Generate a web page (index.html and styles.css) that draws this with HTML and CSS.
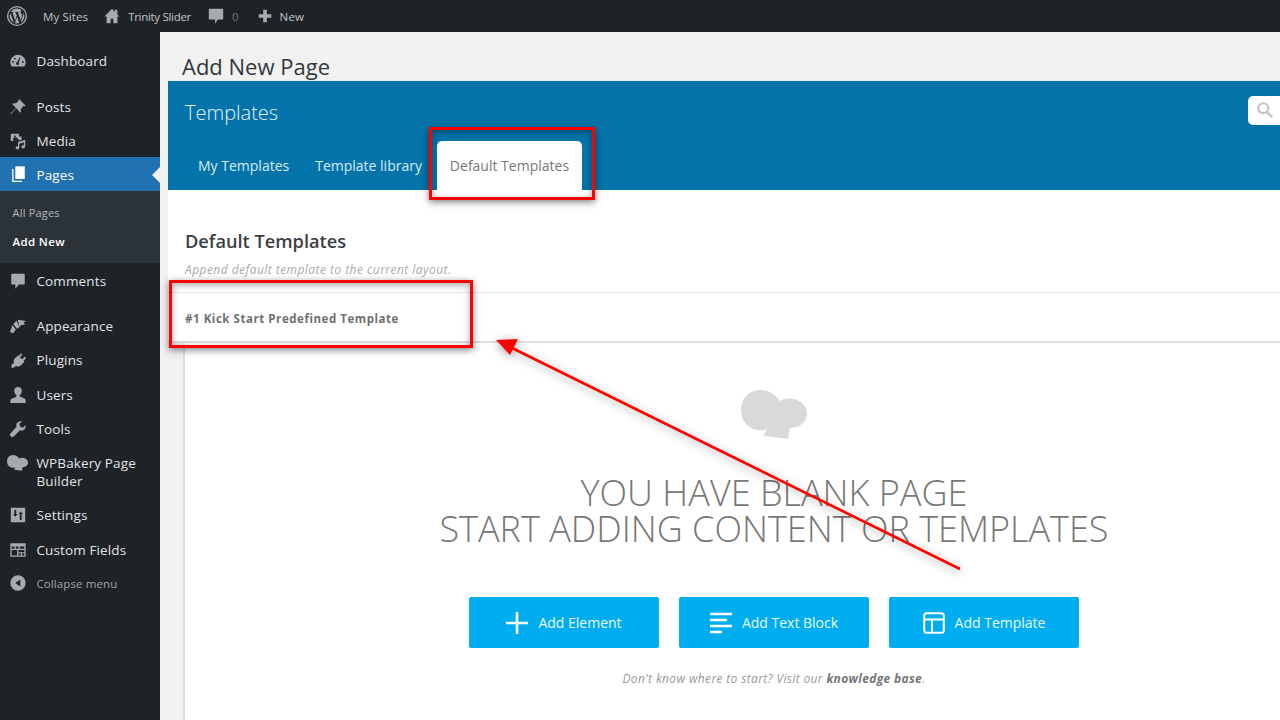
FILE: index.html
```html
<!DOCTYPE html>
<html lang="en">
<head>
<meta charset="utf-8">
<title>Add New Page</title>
<link rel="stylesheet" href="styles.css">
</head>
<body>
<header class="adminbar">
  <svg class="wp-logo" viewBox="0 0 24 24"><circle cx="12" cy="12" r="10.2" fill="none" stroke="#a7aaad" stroke-width="1.5"/><path fill="#a7aaad" d="M4 12c0 3.2 1.9 6 4.6 7.3L4.8 8.8A8 8 0 0 0 4 12zm13.4-.4c0-1-.4-1.7-.7-2.2-.4-.7-.8-1.3-.8-2 0-.8.6-1.5 1.4-1.5h.1A8 8 0 0 0 5.300 7.600h.5c.8 0 2.100-.1 2.100-.1.4 0 .5.6 0 .6 0 0-.4.1-.9.1l3 8.800 1.800-5.300-1.300-3.500c-.4 0-.8-.1-.8-.1-.4 0-.4-.7 0-.6 0 0 1.300.1 2.100.1s2.100-.1 2.100-.1c.4 0 .5.6 0 .6 0 0-.4.1-.9.1l3 8.700.8-2.700c.4-1 .6-1.800.6-2.600zM12.100 12.700l-2.400 7.100a8 8 0 0 0 4.900-.1l-.1-.1-2.400-6.900zm7-4.600v.8c0 .8-.2 1.700-.6 2.900l-2.400 7A8 8 0 0 0 19.100 8.100z"/></svg>
  <span class="bar-text sites">My Sites</span>
  <svg class="bar-icon home" viewBox="0 0 20 20"><path fill="#a7aaad" d="M16 8.500V3h-3v2.500L10 2 1.500 10.500H4V18h4.500v-5h3v5H16v-7.500h2.500z"/></svg>
  <span class="bar-text trinity">Trinity Slider</span>
  <svg class="bar-icon bubble" viewBox="0 0 20 20"><path fill="#a7aaad" d="M3 2h14a1 1 0 0 1 1 1v10a1 1 0 0 1-1 1h-5l-3 4.500V14H3a1 1 0 0 1-1-1V3a1 1 0 0 1 1-1z"/></svg>
  <span class="bar-text dim">0</span>
  <svg class="bar-icon plus" viewBox="0 0 20 20"><path fill="#a7aaad" d="M8 3h4v5h5v4h-5v5H8v-5H3V8h5z"/></svg>
  <span class="bar-text new">New</span>
</header>
<div class="layout">
  <nav class="sidebar">
    <a class="item dash"><svg class="ico" viewBox="0 0 20 20"><path d="M10 3a8.500 8.500 0 0 0-7.500 12.500A1 1 0 0 0 3.400 16h13.200a1 1 0 0 0 .9-.5A8.500 8.500 0 0 0 10 3zm1.300 9.700a1.700 1.700 0 1 1-2.100-1.600l2.600-5 .9.400-1.900 5.300c.2.300.5.600.5.900zM4.500 12a1 1 0 1 1 0-2 1 1 0 0 1 0 2zm2-3.700a1 1 0 1 1 0-2 1 1 0 0 1 0 2zm9 3.700a1 1 0 1 1 0-2 1 1 0 0 1 0 2z" fill-rule="evenodd"/></svg><span>Dashboard</span></a>
    <a class="item posts"><svg class="ico" viewBox="0 0 20 20"><path d="M11.500 1.500l7 7-1.500 1-1-.5-3 3.500c.5 1.500.3 2.800-.5 3.800L8.200 11.500 2 18l-.5-.5L7.800 11 3.500 6.700c1-.8 2.300-1 3.800-.5L10.800 3.200l-.5-1z"/></svg><span>Posts</span></a>
    <a class="item"><svg class="ico" viewBox="0 0 20 20"><path d="M2 2h9v3h3v3.500l-3 .9V8H9.500a2.500 2.500 0 1 0-4 2H2zM6.500 4a1 1 0 1 0 0 2 1 1 0 0 0 0-2zM10 11l8-2.500v7.700c0 1.200-1 2-2.200 2s-2-.7-2-1.700.9-1.700 2-1.700l.7.100v-3.500l-5 1.600v4.300c0 1.200-1 2-2.200 2-1.100 0-2-.7-2-1.700s.9-1.700 2-1.700l.7.100z"/></svg><span>Media</span></a>
    <a class="item current"><svg class="ico" viewBox="0 0 20 20"><path d="M7 1.500h10.500v14H7z"/><path d="M5 4.500v13h9.500V19H3.500V4.500z"/></svg><span>Pages</span></a>
    <div class="submenu">
      <a class="sub">All Pages</a>
      <a class="sub strong">Add New</a>
    </div>
    <a class="item comments"><svg class="ico" viewBox="0 0 20 20"><path d="M3.500 2h13a1 1 0 0 1 1 1v10a1 1 0 0 1-1 1H11l-4 4.500V14H3.500a1 1 0 0 1-1-1V3a1 1 0 0 1 1-1z"/></svg><span>Comments</span></a>
    <a class="item appearance"><svg class="ico" viewBox="0 0 20 20"><path d="M9.500 3l10 1.500-3 1 1 3-4 .5-1.500 2.500zM8.300 4.300L11.800 11l-3 2-4-5.200zM3.900 9l3.700 4.800-2.400 3.700c-1 .7-2.500.4-3.300-.5-.8-1-.7-2.400.2-3.200z"/></svg><span>Appearance</span></a>
    <a class="item"><svg class="ico" viewBox="0 0 20 20"><path d="M13 2.500l2 1.500-2.800 3.300 2.300 1.800L17.500 6l1.500 1.800-2.800 3.300 1 .8-4.500 4.500c-1.500 1-3.300 1-4.700.2L5 18.500H2.500l.3-3 2.800-2.600c-.7-1.500-.5-3.300.7-4.600L11 4.500l1 .8z"/></svg><span>Plugins</span></a>
    <a class="item users"><svg class="ico" viewBox="0 0 20 20"><path d="M10 1a4.200 4.200 0 0 1 4.200 4.500c0 2-1 3.800-2.400 4.500v1.500l5.200 2.300c1 .4 1.500 1.200 1.500 2.200V19H1.500v-2.500c0-1 .5-1.800 1.500-2.200l5.200-2.300V10c-1.400-.7-2.400-2.500-2.400-4.500A4.200 4.200 0 0 1 10 1z"/></svg><span>Users</span></a>
    <a class="item"><svg class="ico" viewBox="0 0 20 20"><path d="M18.500 5.500l-3 3-3-1-1-3 3-3c-2.500-.7-5 .3-6 2.500-.5 1.200-.5 2.500-.1 3.500L1.800 14.600a2.500 2.500 0 0 0 3.500 3.600l6.800-6.700c1.100.4 2.400.4 3.500-.1 2.300-1 3.200-3.500 2.900-5.900z"/></svg><span>Tools</span></a>
    <a class="item double"><svg class="ico cloud" viewBox="0 0 66 50"><path d="M19 0C27 0 34 4 39 11 42 9 47 8 52 9 60 10 66 16 66 24 66 32 58 38 49 38L47 49 24 46 22 47 26 39C22 41 19 40 16 40 6 38 0 30 0 20 0 9 8 0 19 0Z"/></svg><span>WPBakery Page Builder</span></a>
    <a class="item"><svg class="ico" viewBox="0 0 20 20"><path fill-rule="evenodd" d="M2 2h16v16H2zM6 4.500v4.500H4.500l2.500 3 2.500-3H8V4.500zM13 6l-2.500 3H12v6.500h2V9h1.500z"/></svg><span>Settings</span></a>
    <a class="item fields"><svg class="ico" viewBox="0 0 20 20"><path fill-rule="evenodd" d="M1.500 2.500h17v15h-17zM3 6v2.500h3V6zm4.500 0v2.500h3V6zM12 6v2.500h5V6zM3 10v6h6v-6zm7.500 0v2.500H17V10zm0 3.500V16h2.500v-2.500zm4 0V16H17v-2.500z"/></svg><span>Custom Fields</span></a>
    <a class="item collapse"><svg class="ico" viewBox="0 0 20 20"><path fill-rule="evenodd" d="M10 1.500a8.500 8.500 0 1 1 0 17 8.500 8.500 0 0 1 0-17zM12.500 6L7 10l5.500 4z"/></svg><span>Collapse menu</span></a>
  </nav>
  <main class="content">
    <h1 class="page-title">Add New Page</h1>
    <section class="panel">
      <div class="panel-head">
        <div class="head-top">
          <h2 class="panel-title">Templates</h2>
          <div class="search"><svg viewBox="0 0 20 20"><circle cx="8" cy="8" r="5.500" fill="none" stroke="#c3c4c7" stroke-width="2.400"/><path d="M12 12l6 6" stroke="#c3c4c7" stroke-width="2.800"/></svg></div>
        </div>
        <div class="tabs">
          <a class="tab">My Templates</a>
          <a class="tab">Template library</a>
          <a class="tab active">Default Templates</a>
        </div>
      </div>
      <div class="panel-top">
        <h3 class="body-title">Default Templates</h3>
        <p class="body-note">Append default template to the current layout.</p>
        <div class="template-row">#1 Kick Start Predefined Template</div>
      </div>
      <div class="blank">
        <svg class="chef" viewBox="0 0 66 50"><path fill="#d9d9d9" d="M19 0C27 0 34 4 39 11 42 9 47 8 52 9 60 10 66 16 66 24 66 32 58 38 49 38L47 49 24 46 22 47 26 39C22 41 19 40 16 40 6 38 0 30 0 20 0 9 8 0 19 0Z"/></svg>
        <div class="blank-title">YOU HAVE BLANK PAGE<br>START ADDING CONTENT OR TEMPLATES</div>
        <div class="actions">
          <a class="btn"><svg viewBox="0 0 22 22"><path d="M11 1v20M1 11h20" stroke="#fff" stroke-width="2.600" stroke-linecap="round"/></svg>Add Element</a>
          <a class="btn"><svg viewBox="0 0 22 22"><path d="M1 2h20M1 8h15M1 14h20M1 20h10" stroke="#fff" stroke-width="2.600" stroke-linecap="round"/></svg>Add Text Block</a>
          <a class="btn"><svg viewBox="0 0 22 22"><rect x="1.200" y="1.200" width="19.600" height="19.600" rx="2.500" fill="none" stroke="#fff" stroke-width="2"/><path d="M1 7.500h20M9 7.500V21" stroke="#fff" stroke-width="2"/></svg>Add Template</a>
        </div>
        <p class="hint">Don't know where to start? Visit our <b>knowledge base</b>.</p>
      </div>
    </section>
  </main>
</div>
<div class="mark mark-tab"></div>
<div class="mark mark-row"></div>
<svg class="arrow" viewBox="0 0 1280 720">
  <defs><filter id="sh" x="-10%" y="-10%" width="120%" height="130%"><feDropShadow dx="0" dy="2" stdDeviation="5" flood-color="#000" flood-opacity=".4"/></filter></defs>
  <g filter="url(#sh)"><path d="M960 569L510 347" stroke="#f00" stroke-width="2.600" fill="none"/><path fill="#f00" d="M496 340l22-1-8 16z"/></g>
</svg>
</body>
</html>
```
FILE: styles.css
```css
* { box-sizing: border-box; }
html, body { margin: 0; height: 720px; overflow: hidden; }
body { font-family: "Open Sans", "Noto Sans", sans-serif; background: #f1f1f1; color: #333; position: relative; }
.adminbar { height: 32px; background: #1d2327; display: flex; align-items: center; padding-left: 6px; color: #c3c4c7; font-size: 11.500px; }
.wp-logo { width: 22px; height: 22px; margin-right: 15px; }
.bar-text { white-space: nowrap; }
.sites { letter-spacing: .1px; }
.trinity { letter-spacing: -.3px; }
.new { letter-spacing: .2px; }
.bar-text.dim { color: #72777c; margin-right: 17px; margin-left: 1px; }
.bar-icon { width: 18px; height: 18px; flex: none; }
.home { margin-left: 15px; margin-right: 7px; }
.bubble { margin-left: 16px; margin-right: 6px; }
.plus { margin-right: 6px; }
.layout { display: flex; height: 688px; }
.sidebar { width: 160px; flex: none; background: #1d2327; padding-top: 12px; color: #e2e4e6; font-size: 13.500px; letter-spacing: .12px; }
.item { display: flex; align-items: center; height: 34px; padding-left: 36.500px; position: relative; }
.ico { position: absolute; left: 9px; top: 8px; width: 18px; height: 18px; fill: #a7aaad; }
.posts { margin-top: 12px; }
.current { background: #2271b1; color: #fff; margin-top: -1px; padding-top: 1px; }
.current .ico { fill: #fff; }
.current::after { content: ""; position: absolute; right: 0; top: 10px; border: 8px solid transparent; border-right-color: #f1f1f1; border-left: 0; }
.submenu { background: #2c3338; height: 72px; padding-top: 7px; font-size: 11px; letter-spacing: .2px; display: flex; flex-direction: column; }
.sub { height: 29px; padding-left: 12.500px; display: flex; align-items: center; color: #b4b9be; }
.sub.strong { color: #fff; font-weight: 600; font-size: 11.500px; letter-spacing: .35px; }
.comments { margin-top: 1px; }
.appearance { margin-top: 11px; }
.users { margin-top: 1px; }
.fields { margin-top: 1px; }
.collapse { margin-top: -1px; color: #9ea3a8; font-size: 11.500px; letter-spacing: .1px; }
.double { height: 52px; line-height: 18px; }
.double .ico { top: 9px; left: 7px; width: 21px; height: 16px; }
.content { flex: 1; min-width: 0; padding-left: 8px; overflow: hidden; }
.page-title { margin: 0 0 0 14px; height: 49px; padding-top: 19px; font-size: 22px; font-weight: 400; line-height: 30px; color: #32373c; white-space: nowrap; }
.panel-head { height: 109px; background: #0473aa; display: flex; flex-direction: column; }
.head-top { height: 60px; display: flex; justify-content: space-between; align-items: flex-start; }
.panel-title { margin: 17px 0 0 17px; font-size: 20px; font-weight: 300; line-height: 30px; color: #e5f2f9; }
.search { margin-top: 15px; width: 32px; height: 29px; background: #fff; border-radius: 5px 0 0 5px; padding: 5px 0 0 8px; }
.search svg { width: 18px; height: 18px; display: block; }
.tabs { display: flex; align-items: flex-end; padding-left: 17px; height: 49px; font-size: 14px; }
.tab { padding: 0 13px; height: 49px; display: flex; align-items: center; white-space: nowrap; color: #d7ebf5; font-weight: 500; }
.tab.active { background: #fff; color: #777; border-radius: 5px 5px 0 0; font-weight: 400; width: 145px; justify-content: center; padding: 0; margin-left: 2px; }
.panel-top { background: #fff; padding-top: 36px; }
.body-title { margin: 0 0 0 17px; font-size: 18.200px; line-height: 30px; font-weight: 600; color: #3a3f44; }
.body-note { margin: 5px 0 0 17px; font-size: 12px; line-height: 18px; font-style: italic; color: #aaa; letter-spacing: .45px; }
.template-row { margin-top: 13px; height: 51px; padding-top: 3px; border-top: 1px solid #e6e6e6; border-bottom: 2px solid #dedede; padding-left: 17px; display: flex; align-items: center; font-size: 11.500px; font-weight: 700; color: #707070; letter-spacing: .55px; }
.blank { margin-left: 15px; height: 400px; padding-left: 83px; border-left: 2px solid #dedede; background: #fff; display: flex; flex-direction: column; align-items: center; }
.chef { width: 66px; height: 50px; margin-top: 47px; flex: none; }
.blank-title { margin-top: 35px; font-size: 36px; line-height: 36px; font-weight: 300; color: #777; text-align: center; white-space: nowrap; }
.actions { margin-top: 50px; display: flex; gap: 20px; }
.btn { width: 190px; height: 51px; border-radius: 2px; background: #00aeef; color: #eaf8fe; display: flex; align-items: center; justify-content: center; gap: 10px; font-size: 14px; }
.btn svg { width: 22px; height: 22px; }
.hint { margin: 22px 0 0; font-size: 12px; font-style: italic; color: #999; letter-spacing: .35px; }
.hint b { color: #777; }
.mark { position: absolute; border: 3px solid #f00; box-shadow: 0 2px 7px rgba(0,0,0,.5), inset 0 2px 7px rgba(0,0,0,.35); }
.mark-tab { left: 429px; top: 127px; width: 166px; height: 73px; }
.mark-row { left: 169px; top: 280px; width: 304px; height: 68px; }
.arrow { position: absolute; left: 0; top: 0; width: 1280px; height: 720px; pointer-events: none; }
```
